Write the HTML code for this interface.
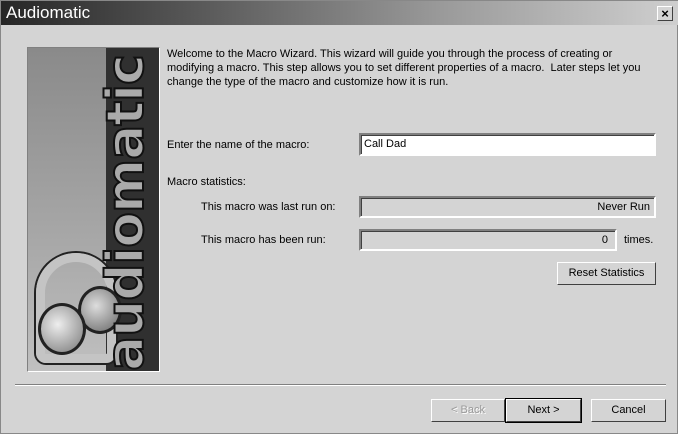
<!DOCTYPE html>
<html><head><style>
*{margin:0;padding:0;box-sizing:border-box}
body{width:678px;height:434px;background:#d4d4d4;font-family:"Liberation Sans",sans-serif;font-size:11px;color:#000;position:relative;overflow:hidden;border:1px solid #888}
.t{position:absolute;left:0;top:0;width:678px;height:24px;background:linear-gradient(90deg,#262626 0%,#5a5a5a 30%,#9a9a9a 65%,#cfcfcf 100%)}
.t span{position:absolute;left:5px;top:2px;color:#fff;font-size:17px}
.x{position:absolute;right:6px;top:5px;width:16px;height:15px;background:#d4d4d4;border:1px solid;border-color:#fff #404040 #404040 #fff;font-size:13px;font-weight:bold;text-align:center;line-height:13px}
.a{position:absolute;white-space:nowrap}
.in{position:absolute;border:2px solid;border-color:#808080 #fff #fff #808080;box-shadow:inset 1px 1px 0 #404040}
.b{position:absolute;height:23px;border:1px solid;border-color:#fff #404040 #404040 #fff;text-align:center;line-height:20px;background:#d4d4d4}
</style></head><body>
<div class="t"><span>Audiomatic</span><div class="x">×</div></div>
<div style="position:absolute;left:26px;top:46px;width:133px;height:325px;border:1px solid;border-color:#808080 #fff #fff #808080;background:#303030;overflow:hidden">
<div style="position:absolute;left:0;top:0;width:78px;height:325px;background:linear-gradient(180deg,#8a8a8a,#a8a8a8 60%,#c0c0c0)"></div>
<div style="position:absolute;left:8px;top:205px;width:80px;height:110px;border:9px solid #c4c4c4;border-radius:40px 40px 10px 10px;box-shadow:0 0 0 2px #222"></div>
<div style="position:absolute;left:50px;top:238px;width:44px;height:48px;border-radius:50%;background:radial-gradient(circle at 40% 40%,#ddd,#666);border:3px solid #222"></div>
<div style="position:absolute;left:10px;top:255px;width:48px;height:52px;border-radius:50%;background:radial-gradient(circle at 40% 40%,#eee,#777);border:3px solid #222"></div>
<div style="position:absolute;left:-62px;top:140px;width:320px;height:50px;transform:rotate(-90deg);transform-origin:center;font-size:52px;font-weight:bold;color:#aaa;-webkit-text-stroke:2px #111;letter-spacing:-1px;line-height:50px;text-align:center;font-family:'DejaVu Sans',sans-serif">audiomatic</div>
</div>
<div class="a" style="left:166px;top:46px;line-height:14px;white-space:normal;width:490px">Welcome to the Macro Wizard. This wizard will guide you through the process of creating or modifying a macro. This step allows you to set different properties of a macro.&nbsp; Later steps let you change the type of the macro and customize how it is run.</div>
<div class="a" style="left:166px;top:138px">Enter the name of the macro:</div>
<div class="in" style="left:358px;top:132px;width:297px;height:23px;background:#fff"><span style="position:absolute;left:3px;top:3px">Call Dad</span></div>
<div class="a" style="left:166px;top:175px">Macro statistics:</div>
<div class="a" style="left:200px;top:200px">This macro was last run on:</div>
<div class="in" style="left:358px;top:195px;width:297px;height:22px"><span style="position:absolute;right:4px;top:3px">Never Run</span></div>
<div class="a" style="left:200px;top:233px">This macro has been run:</div>
<div class="in" style="left:358px;top:228px;width:258px;height:22px"><span style="position:absolute;right:7px;top:3px">0</span></div>
<div class="a" style="left:623px;top:233px">times.</div>
<div class="b" style="left:556px;top:261px;width:99px">Reset Statistics</div>
<div style="position:absolute;left:14px;top:383px;width:651px;height:2px;border-top:1px solid #808080;border-bottom:1px solid #fff"></div>
<div class="b" style="left:430px;top:398px;width:74px;color:#999;text-shadow:1px 1px 0 #fff">&lt; Back</div>
<div class="b" style="left:505px;top:398px;width:75px;outline:1px solid #000;border-color:#fff #404040 #404040 #fff">Next &gt;</div>
<div class="b" style="left:590px;top:398px;width:75px">Cancel</div>
</body></html>
